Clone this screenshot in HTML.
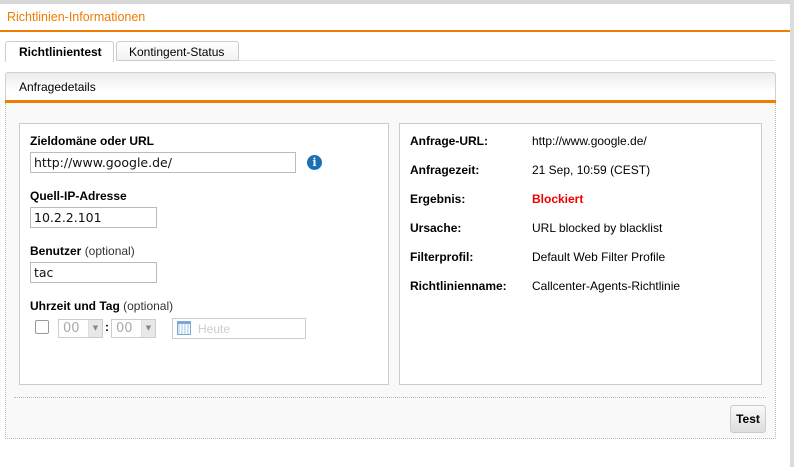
<!DOCTYPE html>
<html><head><style>
*{box-sizing:border-box;margin:0;padding:0}
body{width:794px;height:467px;background:#fff;font-family:"Liberation Sans",sans-serif;font-size:12px;color:#000;position:relative;overflow:hidden}
.abs{position:absolute}
.lbl{font-weight:bold;font-size:12px}
.lbl span{font-weight:normal;color:#333}
.inp{position:absolute;height:21px;border:1px solid #bbb;background:#fff;font-family:"DejaVu Sans",sans-serif;font-size:12.5px;padding:2px 3px;line-height:15px;color:#111}
.r{position:absolute;left:410px;font-size:12px}
.v{position:absolute;left:532px;font-size:12px}
.sel{position:absolute;top:319px;width:45px;height:19px;border:1px solid #ccc;color:#aaa;font-family:"DejaVu Sans",sans-serif;font-size:13px;padding:1px 0 0 4px}
.sel div{position:absolute;right:0;top:0;width:14px;height:17px;background:#e8e8e8;border-left:1px solid #ddd;color:#888;font-size:7px;text-align:center;line-height:17px}
</style></head><body>
<div class="abs" style="left:0;top:0;width:794px;height:4px;background:#d8d8d8"></div>
<div class="abs" style="left:790px;top:0;width:4px;height:467px;background:#dcdcdc"></div>
<div class="abs" style="left:7px;top:10px;color:#ee7d00;font-size:12.5px">Richtlinien-Informationen</div>
<div class="abs" style="left:0;top:30px;width:790px;height:2px;background:#ee7d00"></div>
<div class="abs" style="left:5px;top:41px;width:109px;height:21px;border:1px solid #ccc;border-bottom:none;border-radius:3px 3px 0 0;background:#fff;font-weight:bold;padding:3px 0 0 13px">Richtlinientest</div>
<div class="abs" style="left:116px;top:41px;width:123px;height:20px;border:1px solid #ccc;border-radius:3px 3px 0 0;background:linear-gradient(#fff,#f2f2f2);padding:3px 0 0 12px">Kontingent-Status</div>
<div class="abs" style="left:239px;top:60px;width:536px;height:1px;background:#e4e4e4"></div>
<div class="abs" style="left:5px;top:72px;width:771px;height:31px;border:1px solid #d0d0d0;border-bottom:none;border-radius:3px 3px 0 0;background:linear-gradient(#ececec,#fff 60%);padding:7px 0 0 13px">Anfragedetails</div>
<div class="abs" style="left:5px;top:100px;width:771px;height:3px;background:#ee7d00"></div>
<div class="abs" style="left:5px;top:103px;width:771px;height:336px;background:#f9f9f9;border:1px dotted #bbb;border-top:none"></div>
<div class="abs" style="left:19px;top:123px;width:370px;height:262px;background:#fff;border:1px solid #ccc"></div>
<div class="abs" style="left:399px;top:123px;width:363px;height:262px;background:#fff;border:1px solid #ccc"></div>
<div class="abs" style="left:14px;top:397px;width:752px;border-top:1px dotted #bbb"></div>
<div class="abs lbl" style="left:30px;top:134px">Zieldomäne oder URL</div>
<div class="inp" style="left:30px;top:152px;width:266px">http://www.google.de/</div>
<div class="abs" style="left:307px;top:155px;width:15px;height:15px;border-radius:50%;background:#1a6fb5;color:#fff;font-weight:bold;font-size:11px;text-align:center;line-height:15px;font-family:'DejaVu Serif',serif">i</div>
<div class="abs lbl" style="left:30px;top:189px">Quell-IP-Adresse</div>
<div class="inp" style="left:30px;top:207px;width:127px">10.2.2.101</div>
<div class="abs lbl" style="left:30px;top:244px">Benutzer <span>(optional)</span></div>
<div class="inp" style="left:30px;top:262px;width:127px">tac</div>
<div class="abs lbl" style="left:30px;top:299px">Uhrzeit und Tag <span>(optional)</span></div>
<div class="abs" style="left:35px;top:320px;width:14px;height:14px;border:1px solid #999;border-radius:2px"></div>
<div class="sel" style="left:58px">00<div>▼</div></div>
<div class="abs" style="left:105px;top:320px;font-weight:bold">:</div>
<div class="sel" style="left:111px">00<div>▼</div></div>
<div class="abs" style="left:172px;top:318px;width:134px;height:21px;border:1px solid #ccc;color:#ccc;font-size:12px;padding:3px 0 0 25px">Heute<div class="abs" style="left:4px;top:2px;width:14px;height:14px;border:1px solid #7aa9d6;background:repeating-linear-gradient(90deg,#cfe0f2 0 2px,#fff 2px 3px);border-top:3px solid #7aa9d6"></div></div>
<div class="r lbl" style="top:134px">Anfrage-URL:</div><div class="v" style="top:134px">http://www.google.de/</div>
<div class="r lbl" style="top:163px">Anfragezeit:</div><div class="v" style="top:163px">21 Sep, 10:59 (CEST)</div>
<div class="r lbl" style="top:192px">Ergebnis:</div><div class="v" style="top:192px;color:#e00;font-weight:bold">Blockiert</div>
<div class="r lbl" style="top:221px">Ursache:</div><div class="v" style="top:221px">URL blocked by blacklist</div>
<div class="r lbl" style="top:250px">Filterprofil:</div><div class="v" style="top:250px">Default Web Filter Profile</div>
<div class="r lbl" style="top:279px">Richtlinienname:</div><div class="v" style="top:279px">Callcenter-Agents-Richtlinie</div>
<div class="abs" style="left:730px;top:405px;width:36px;height:28px;border:1px solid #ccc;border-radius:3px;background:linear-gradient(#fafafa,#ddd);font-weight:bold;text-align:center;line-height:26px">Test</div>
</body></html>
